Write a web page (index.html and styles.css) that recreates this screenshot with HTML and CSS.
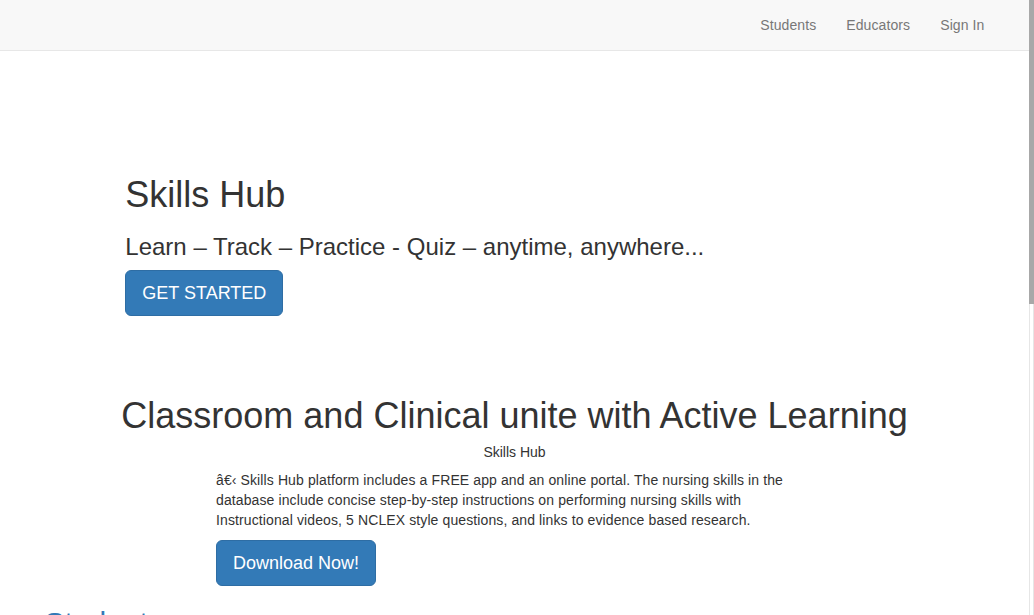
FILE: index.html
```html
<!DOCTYPE html>
<html lang="en">
<head>
<meta charset="utf-8">
<title>Skills Hub</title>
<link rel="stylesheet" href="styles.css">
</head>
<body>
<div class="page">
  <nav class="navbar">
    <div class="container">
      <ul class="nav-right">
        <li><a href="#">Students</a></li>
        <li><a href="#">Educators</a></li>
        <li><a href="#">Sign In</a></li>
      </ul>
    </div>
  </nav>
  <main class="container">
    <div class="row">
      <section class="hero">
        <h1 class="hero-title">Skills Hub</h1>
        <h3 class="hero-sub">Learn – Track – Practice - Quiz – anytime, anywhere...</h3>
        <a class="btn btn-lg btn-upper" href="#">GET STARTED</a>
      </section>
    </div>
    <section class="unite">
      <h1 class="unite-title">Classroom and Clinical unite with Active Learning</h1>
      <div class="unite-label">Skills Hub</div>
      <div class="unite-body">
        <p>â€‹ Skills Hub platform includes a FREE app and an online portal. The nursing skills in the database include concise step-by-step instructions on performing nursing skills with Instructional videos, 5 NCLEX style questions, and links to evidence based research.</p>
        <a class="btn btn-lg" href="#">Download Now!</a>
      </div>
    </section>
    <section class="students">
      <h2 class="section-title">Students</h2>
    </section>
  </main>
</div>
<div class="scroll-rail" aria-hidden="true">
  <div class="scroll-thumb"></div>
</div>
</body>
</html>
```
FILE: styles.css
```css
html {
  font-family: "Liberation Sans", Arial, Helvetica, sans-serif;
}
* {
  box-sizing: border-box;
}
body {
  margin: 0;
  display: flex;
  align-items: flex-start;
  font-family: "Liberation Sans", Arial, Helvetica, sans-serif;
  font-size: 14px;
  line-height: 1.42857143;
  color: #333;
  background: #fff;
}
.page {
  flex: 1;
  min-width: 0;
}
.scroll-rail {
  position: sticky;
  top: 0;
  width: 5px;
  height: 100vh;
  flex: none;
  background: #fff;
  border-left: 1px solid #e6e6e6;
  border-right: 1px solid #e6e6e6;
}
.scroll-thumb {
  height: 304px;
  margin: 0 -1px;
  background: #a8a8a8;
}
.container {
  width: 970px;
  margin: 0 auto;
  padding: 0 15px;
}
.navbar {
  background: #f8f8f8;
  border-bottom: 1px solid #e7e7e7;
  height: 51px;
}
.nav-right {
  list-style: none;
  margin: 0 -15px 0 0;
  padding: 0;
  display: flex;
  justify-content: flex-end;
}
.nav-right a {
  display: block;
  padding: 15px;
  line-height: 20px;
  color: #777;
  text-decoration: none;
  letter-spacing: 0.1px;
}
.row {
  margin: 0 -15px;
}
.hero {
  margin-left: 8.33333333%;
  padding: 124px 15px 0;
}
.hero-title {
  margin: 0;
  font-size: 36px;
  font-weight: 500;
  line-height: 1.1;
}
.hero-sub {
  margin: 19px 0 10px;
  font-size: 24px;
  font-weight: 500;
  line-height: 1.1;
}
.btn {
  display: inline-block;
  background: #337ab7;
  border: 1px solid #2e6da4;
  color: #fff;
  text-decoration: none;
  white-space: nowrap;
  vertical-align: middle;
}
.btn-lg {
  padding: 10px 16px;
  font-size: 18px;
  line-height: 1.3333333;
  border-radius: 6px;
}
.unite {
  margin-top: 80px;
}
.unite-title {
  margin: 0;
  font-size: 36px;
  font-weight: 500;
  line-height: 1.1;
  text-align: center;
}
.unite-label {
  margin-top: 6px;
  text-align: center;
}
.unite-body {
  width: 597px;
  margin: 8px auto 0;
  padding-right: 20px;
}
.unite-body p {
  margin: 0 0 10px;
  letter-spacing: 0.11px;
}
.students {
  padding-top: 20px;
  min-height: 658px;
}
.section-title {
  margin: 0;
  font-size: 30px;
  font-weight: 500;
  line-height: 1.1;
  color: #337ab7;
}
```
